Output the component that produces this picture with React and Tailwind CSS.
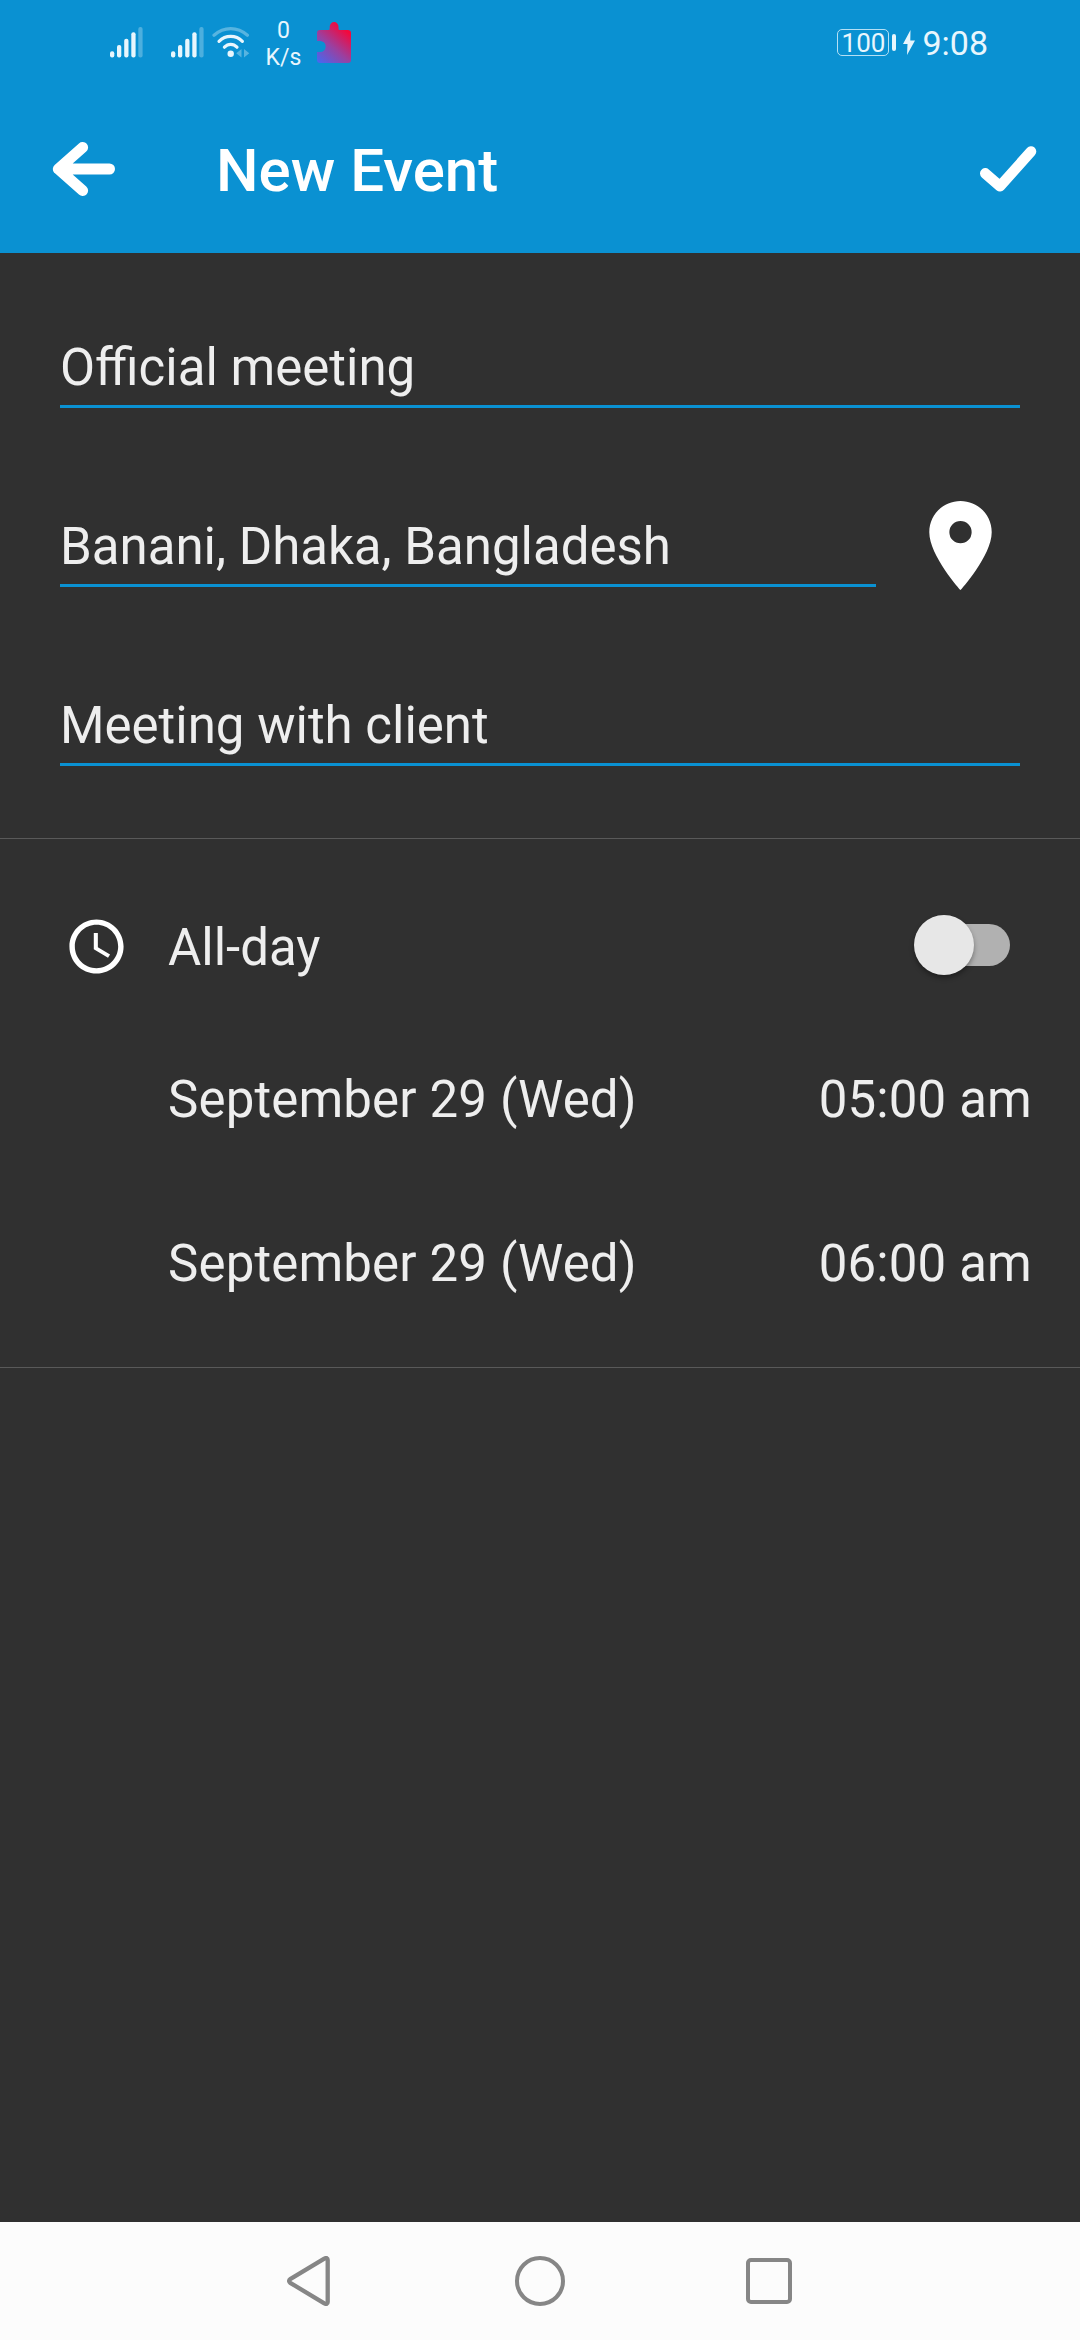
function SignalBars() {
  return (
    <svg width="34" height="31" viewBox="0 0 34 31" fill="#e8f6fd">
      <rect x="0" y="24.3" width="4.3" height="6.2" rx="2" />
      <rect x="7" y="18" width="4.3" height="12.5" rx="2" />
      <rect x="14.2" y="11.7" width="4.3" height="18.8" rx="2" />
      <rect x="21.3" y="5.3" width="4.3" height="25.2" rx="2" />
      <rect x="28.3" y="0" width="4.3" height="30.5" rx="2" opacity="0.3" />
    </svg>
  );
}

function Wifi() {
  return (
    <svg width="38" height="31" viewBox="212 27 38 31" fill="none" stroke="#e8f6fd" strokeWidth="3.2" strokeLinecap="round">
      <path d="M214 35.3Q221.500 28.700 230.700 28.700Q239.900 28.700 247.400 35.300" opacity="0.35" />
      <path d="M219 41.300Q224 36.400 230.700 36.400Q237.400 36.400 242.400 41.300" />
      <path d="M224.400 47.200Q227.200 44.300 230.700 44.300Q234.200 44.300 237 47.200" />
      <circle cx="230.700" cy="53.700" r="3.2" fill="#e8f6fd" stroke="none" />
      <path d="M241.500 49v8.500l-5.300-4.250zM244 49v8.500l5.300-4.250z" fill="#e8f6fd" stroke="none" opacity="0.35" />
    </svg>
  );
}

function Puzzle() {
  return (
    <svg width="34" height="41" viewBox="317 22 34 41">
      <defs>
        <linearGradient id="puzzle" gradientUnits="userSpaceOnUse" x1="319" y1="63" x2="347" y2="31">
          <stop offset="0" stopColor="#4668f0" />
          <stop offset="0.5" stopColor="#9a40a0" />
          <stop offset="1" stopColor="#f4083c" />
        </linearGradient>
      </defs>
      <path
        fill="url(#puzzle)"
        d="M320 30h8.500q1.200 0 1.200-1.500v-2a4.400 4.400 0 0 1 8.800 0v2q0 1.500 1.200 1.500H348a3 3 0 0 1 3 3v27a3 3 0 0 1-3 3H320a3 3 0 0 1-3-3v-8h3.200a5.500 5.500 0 0 0 0-11H317v-8a3 3 0 0 1 3-3z"
      />
    </svg>
  );
}

function StatusBar() {
  return (
    <div className="flex h-[85px] items-start text-[#e8f6fd]">
      <div className="ml-[110px] mt-[27px]"><SignalBars /></div>
      <div className="ml-[27px] mt-[27px]"><SignalBars /></div>
      <div className="ml-[7px] mt-[27px]"><Wifi /></div>
      <div className="ml-[13px] mt-[17px] w-[41px] text-center text-[23px] leading-[27px]">
        <div>0</div>
        <div>K/s</div>
      </div>
      <div className="ml-[13px] mt-[22px]"><Puzzle /></div>
      <div className="ml-auto mt-[29px] flex h-[27px] w-[52px] items-center justify-center rounded-[5px] border-[1.5px] border-[#b5e0f5] text-[26px] leading-[26px]">
        100
      </div>
      <div className="ml-[2.5px] mt-[34px] h-[17px] w-[4px] rounded-[2px] bg-[#e8f6fd]" />
      <svg className="ml-[7px] mt-[30px]" width="12" height="25" viewBox="0 0 12 25" fill="#e8f6fd">
        <path d="M7.500 0L0 14h4.500L4 25l8-14.500H7.300z" />
      </svg>
      <div className="ml-[7.5px] mr-[92px] mt-[23px] text-[34px] leading-[40px]">9:08</div>
    </div>
  );
}

function AppBar() {
  return (
    <div className="flex h-[168px] items-start text-white">
      <svg className="ml-[52px] mt-[57px]" width="64" height="54" viewBox="52 142 64 54" fill="none" stroke="currentColor" strokeWidth="11" strokeLinecap="round" strokeLinejoin="round">
        <path d="M82.600 147.500L58.300 169L82.600 190.500M60 169H109.500" />
      </svg>
      <h1 className="ml-[100px] mt-[51px] text-[60px] font-medium leading-[70px]">New Event</h1>
      <svg className="ml-auto mr-[43px] mt-[60px]" width="58" height="48" viewBox="979 145 58 48" fill="none" stroke="currentColor" strokeWidth="10.600" strokeLinecap="round" strokeLinejoin="round">
        <path d="M985.300 173.400L1000 186.300L1031 151.500" />
      </svg>
    </div>
  );
}

function Field({ value, children }) {
  return (
    <div className="flex h-[96px] items-start">
      <div className="mt-[3px] flex h-[96px] flex-1 items-end border-b-[3px] border-[#0a91d2]">
        <span className="text-[51px] leading-[74px]">{value}</span>
      </div>
      {children}
    </div>
  );
}

function PinIcon() {
  return (
    <svg className="ml-[30.5px] mr-[6.5px] mt-[4px] shrink-0" width="107" height="107" viewBox="0 0 24 24" fill="#fff">
      <path d="M12 2C8.130 2 5 5.130 5 9c0 5.250 7 13 7 13s7-7.750 7-13c0-3.870-3.130-7-7-7zm0 9.500a2.500 2.500 0 0 1 0-5 2.500 2.500 0 0 1 0 5z" />
    </svg>
  );
}

function TimeRow({ date, time }) {
  return (
    <div className="flex items-center justify-between pl-[168px] pr-[48px] text-[51px] leading-[60px] tracking-[0.15px]">
      <span>{date}</span>
      <span>{time}</span>
    </div>
  );
}

function NavBar() {
  return (
    <div className="flex h-[118px] items-start bg-[#fcfcfc] pt-[34px]">
      <svg className="ml-[287px]" width="43" height="50" viewBox="287 2256 43 50" fill="none" stroke="#868686" strokeWidth="4.300" strokeLinejoin="round">
        <path d="M290.200 2279.200L324.300 2258.600Q327.700 2257 327.700 2260V2302Q327.700 2305 324.300 2303.400L290.200 2282.800Q288 2281 290.200 2279.200Z" />
      </svg>
      <div className="ml-[185px] h-[50px] w-[50px] rounded-full border-[4.500px] border-[#868686]" />
      <div className="ml-[181px] mt-[2px] h-[46px] w-[46px] rounded-[5px] border-4 border-[#868686]" />
    </div>
  );
}

export default function App() {
  return (
    <div className="flex h-[2340px] w-[1080px] flex-col overflow-hidden bg-[#303030] font-[Roboto,sans-serif] text-[#eeeeee]">
      <header className="bg-[#0a91d2]">
        <StatusBar />
        <AppBar />
      </header>
      <main className="flex-1">
        <section className="flex h-[586px] flex-col gap-[83px] border-b border-[#595959] px-[60px] pt-[56px]">
          <Field value="Official meeting" />
          <Field value="Banani, Dhaka, Bangladesh">
            <PinIcon />
          </Field>
          <Field value="Meeting with client" />
        </section>
        <section className="h-[529px] border-b border-[#595959] pt-[74px]">
          <div className="flex h-[66px] items-center">
            <svg className="ml-[63.5px] mr-[39.5px]" width="65" height="65" viewBox="0 0 24 24" fill="#fff">
              <path d="M11.990 2C6.470 2 2 6.480 2 12s4.470 10 9.990 10C17.520 22 22 17.520 22 12S17.520 2 11.990 2zM12 20c-4.420 0-8-3.580-8-8s3.580-8 8-8 8 3.580 8 8-3.580 8-8 8zm.500-13H11v6l5.250 3.150.750-1.230-4.500-2.670z" />
            </svg>
            <span className="pt-[4px] text-[51px] leading-[66px]">All-day</span>
            <div className="relative mb-[2px] ml-auto mr-[70px] flex h-[42px] w-[88px] items-center rounded-full bg-[#b1b1b1]">
              <div className="absolute left-[-8px] h-[60px] w-[60px] rounded-full bg-[#e7e7e7] shadow-[0_3px_5px_rgba(0,0,0,0.35)]" />
            </div>
          </div>
          <div className="mt-[91px] flex flex-col gap-[104px]">
            <TimeRow date="September 29 (Wed)" time="05:00 am" />
            <TimeRow date="September 29 (Wed)" time="06:00 am" />
          </div>
        </section>
      </main>
      <NavBar />
    </div>
  );
}
